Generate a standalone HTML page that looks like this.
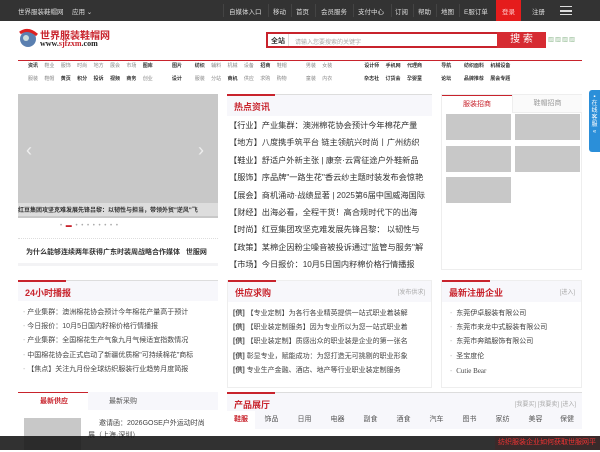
<!DOCTYPE html>
<html><head><meta charset="utf-8"><style>
*{margin:0;padding:0;box-sizing:border-box}
body{width:600px;height:450px;overflow:hidden;background:#fff;font-family:"Liberation Sans","Noto Sans CJK SC",sans-serif;color:#333;position:relative;font-size:8px}
.a{position:absolute;white-space:nowrap}
.top{position:absolute;left:0;top:0;width:600px;height:21px;background:#333;color:#ddd;font-size:6.5px}
.top span{position:absolute;top:6px}
.top s{position:absolute;top:4px;width:1px;height:13px;background:#444}
.red{color:#c8232c}
.box{position:absolute;border:1px solid #eee}
.hd{position:absolute;left:0;top:0;right:0;height:21px;background:#f7f7fb;border-top:1px solid #ddd}
.hd b{position:absolute;left:0;top:-1px;height:2px;width:48px;background:#c8232c}
.hd i{position:absolute;left:7px;top:5px;font-style:normal;color:#c8232c;font-size:9px;font-weight:bold}
.more{position:absolute;right:6px;top:6px;font-size:6px;color:#aaa}
.li{position:absolute;font-size:7px;color:#444;white-space:nowrap}
.gr{position:absolute;background:#c8c8c8}
</style></head><body>
<div class="top">
<span style="left:18px">世界服装鞋帽网</span><span style="left:72px">应用 ⌄</span>
<s style="left:223px"></s><span style="left:229px">自媒体入口</span><s style="left:268px"></s><span style="left:273px">移动</span><s style="left:291px"></s><span style="left:296px">首页</span><s style="left:315px"></s><span style="left:321px">会员服务</span><s style="left:353px"></s><span style="left:358px">支付中心</span><s style="left:391px"></s><span style="left:395px">订阅</span><s style="left:413px"></s><span style="left:418px">帮助</span><s style="left:436px"></s><span style="left:441px">地图</span><s style="left:459px"></s><span style="left:464px">E服订单</span>
<div style="position:absolute;left:496px;top:0;width:25px;height:21px;background:#e51c1c"></div><span style="left:502px;color:#fcc">登录</span><span style="left:532px">注册</span>
<div style="position:absolute;left:560px;top:6px;width:12px;height:9px;border-top:1.5px solid #ddd;border-bottom:1.5px solid #ddd"></div><div style="position:absolute;left:560px;top:10px;width:12px;height:1.5px;background:#ddd"></div>
</div>
<svg class="a" style="left:17px;top:27px" width="22" height="22"><circle cx="11" cy="12" r="8" fill="#5a7fb0"/><path d="M3 6 Q11 0 20 8" stroke="#d22" stroke-width="3" fill="none"/><circle cx="9" cy="11" r="3" fill="#cdd"/></svg>
<div class="a" style="left:40px;top:27px;font-size:10px;font-weight:bold;color:#c8232c">世界服装鞋帽网</div>
<div class="a" style="left:40px;top:39px;font-size:8px;font-weight:bold;color:#222;font-family:'Liberation Serif',serif">www.<span class="red">sjfzxm</span>.com</div>
<div class="a" style="left:266px;top:32px;width:280px;height:16px;border:2px solid #c8232c;background:#fff"></div>
<div class="a" style="left:271px;top:36px;font-size:7px;font-weight:bold">全站</div>
<div class="a" style="left:288px;top:34px;width:1px;height:12px;background:#ddd"></div>
<div class="a" style="left:295px;top:37px;font-size:6px;color:#aaa">请输入您要搜索的关键字</div>
<div class="a" style="left:497px;top:32px;width:49px;height:16px;background:#d62b32;color:#fff;font-size:10px;text-align:center;line-height:16px">搜 索</div>
<div class="a" style="left:548px;top:35px;font-size:6px;color:#7a7;letter-spacing:1px">▨▨▨▨</div>
<div class="a" style="left:18px;top:60px;width:564px;height:1px;background:#c8232c"></div>
<div class="a" style="left:28px;top:60px;font-size:5px;line-height:13px;color:#888;word-spacing:5px">
<b style="color:#333">资讯</b> 鞋业 服饰 时尚 地方 展会 市场 <b style="color:#333">图库</b> &nbsp; <b style="color:#333">图片</b> &nbsp;<b style="color:#333">纺织</b> 辅料 机械 设备 <b style="color:#333">招商</b> 鞋帽 &nbsp; 男装 女装 &nbsp; &nbsp; <b style="color:#333">设计师 手机网 代理商</b> &nbsp; <b style="color:#333">导航 &nbsp;纺织面料 机械设备</b><br>
服装 鞋帽 <b style="color:#333">黄页 积分 投诉 视频 商务</b> 创业 &nbsp; <b style="color:#333">设计</b> &nbsp;服装 分站 <b style="color:#333">商机</b> 供应 求购 购物 &nbsp; 童装 内衣 &nbsp; &nbsp; <b style="color:#333">杂志社 订货会 孕婴童</b> &nbsp; <b style="color:#333">论坛 &nbsp;品牌推荐 展会专题</b></div>
<div class="gr" style="left:18px;top:94px;width:200px;height:124px"></div>
<div class="a" style="left:26px;top:140px;color:#eee;font-size:18px">‹</div><div class="a" style="left:198px;top:140px;color:#eee;font-size:18px">›</div>
<div class="a" style="left:18px;top:203px;width:200px;height:13px;background:#ddd"></div>
<div class="a" style="left:18px;top:205px;width:200px;overflow:hidden;font-size:6px;font-weight:bold;color:#333">红豆集团攻坚克难发展先锋吕黎：以韧性与担当，带领外贸"逆风"飞</div>
<div class="a" style="left:60px;top:223px;font-size:6px;color:#aaa;letter-spacing:1px">• <span style="color:#c8232c">▬</span> • • • • • • • •</div>
<div class="a" style="left:18px;top:238px;width:200px;border-top:1px dotted #ddd"></div>
<div class="a" style="left:26px;top:247px;width:192px;overflow:hidden;font-size:7px;font-weight:bold">为什么能够连续两年获得广东时装周战略合作媒体 &nbsp; 世服网</div>
<div class="a" style="left:18px;top:263px;width:200px;height:3px;background:#f3f3f5"></div>
<div class="box" style="left:227px;top:94px;width:205px;height:176px;border:none">
<div class="hd" style="height:22px"><b></b><i>热点资讯</i></div>
<div style="position:absolute;left:2px;top:23px;font-size:8.2px;line-height:17.4px;color:#333;white-space:nowrap">【行业】产业集群：澳洲棉花协会预计今年棉花产量<br>【地方】八度携手筑平台 链主领航兴时尚丨广州纺织<br>【鞋业】舒适户外新主张 | 康奈·云霄征途户外鞋新品<br>【服饰】序品牌"一路生花"香云纱主题时装发布会惊艳<br>【展会】商机涌动·战绩显著 | 2025第6届中国威海国际<br>【财经】出海必看，全程干货！高合规时代下的出海<br>【时尚】红豆集团攻坚克难发展先锋吕黎： 以韧性与<br>【政策】某棉企因粉尘噪音被投诉通过"监管与服务"解<br>【市场】今日报价：10月5日国内籽棉价格行情播报</div></div>
<div class="box" style="left:441px;top:94px;width:141px;height:176px">
<div style="position:absolute;left:0;top:0;width:70px;height:18px;border-top:1px solid #c8232c;color:#c8232c;font-size:7px;text-align:center;line-height:17px">服装招商</div>
<div style="position:absolute;left:70px;top:0;width:70px;height:18px;background:#fafafa;border-left:1px solid #eee;border-bottom:1px solid #eee;color:#999;font-size:7px;text-align:center;line-height:17px">鞋帽招商</div>
<div class="gr" style="left:4px;top:19px;width:65px;height:26px"></div><div class="gr" style="left:73px;top:19px;width:65px;height:26px"></div>
<div class="gr" style="left:4px;top:51px;width:65px;height:26px"></div><div class="gr" style="left:73px;top:51px;width:65px;height:26px"></div>
<div class="gr" style="left:4px;top:82px;width:65px;height:26px"></div></div>
<div class="a" style="left:589px;top:90px;width:11px;height:62px;background:#2b8fd9;border-radius:3px 0 0 3px;color:#fff;font-size:6px;line-height:7px;text-align:center;padding-top:4px;white-space:normal">▪<br>在<br>线<br>客<br>服<br>«</div>
<div class="box" style="left:18px;top:280px;width:200px;height:122px;border:none;border-bottom:1px solid #eee">
<div class="hd"><b></b><i>24小时播报</i></div>
<div class="li" style="left:5px;top:26px;line-height:14.2px"><span style="color:#bbb">-</span> 产业集群：澳洲棉花协会预计今年棉花产量高于预计<br><span style="color:#bbb">-</span> 今日报价：10月5日国内籽棉价格行情播报<br><span style="color:#bbb">-</span> 产业集群：全国棉花生产气象九月气候适宜指数情况<br><span style="color:#bbb">-</span> 中国棉花协会正式启动了新疆优质棉"可持续棉花"商标<br><span style="color:#bbb">-</span> 【焦点】关注九月份全球纺织服装行业趋势月度简报</div></div>
<div class="box" style="left:227px;top:280px;width:205px;height:108px">
<div class="hd" style="border-top:none"><b></b><i>供应求购</i><span class="more">[发布供求]</span></div>
<div class="li" style="left:5px;top:26px;line-height:14.2px"><b>[供]</b> 【专业定制】为各行各业精英提供一站式职业着装解<br><b>[供]</b> 【职业装定制服务】因为专业所以为您一站式职业着<br><b>[供]</b> 【职业装定制】质感出众的职业装是企业的第一张名<br><b>[供]</b> 彰显专业，赋能成功：为您打造无可挑剔的职业形象<br><b>[供]</b> 专业生产金融、酒店、地产等行业职业装定制服务</div></div>
<div class="box" style="left:441px;top:280px;width:141px;height:108px">
<div class="hd" style="border-top:none"><b></b><i>最新注册企业</i><span class="more">[进入]</span></div>
<div class="li" style="left:8px;top:26px;line-height:14.2px"><span style="color:#bbb">-</span> &nbsp;东莞伊卓服装有限公司<br><span style="color:#bbb">-</span> &nbsp;东莞市来龙中式服装有限公司<br><span style="color:#bbb">-</span> &nbsp;东莞市奔踏服饰有限公司<br><span style="color:#bbb">-</span> &nbsp;圣宝度伦<br><span style="color:#bbb">-</span> &nbsp;<span style="font-family:'Liberation Serif',serif">Cutie Bear</span></div></div>
<div class="a" style="left:18px;top:392px;width:200px;height:18px;background:#f7f7fb"></div>
<div class="a" style="left:18px;top:392px;width:70px;height:18px;background:#fff;border-top:1px solid #c8232c"></div>
<div class="a" style="left:40px;top:396px;font-size:7px;font-weight:bold;color:#c8232c">最新供应</div>
<div class="a" style="left:109px;top:396px;font-size:7px;color:#555">最新采购</div>
<div class="gr" style="left:24px;top:418px;width:57px;height:32px"></div>
<div class="a" style="left:99px;top:418px;font-size:7px;color:#444">邀请函：2026GOSE户外运动时尚</div>
<div class="a" style="left:88px;top:430px;font-size:7px;color:#444">展（上海·深圳）</div>
<div class="box" style="left:227px;top:392px;width:355px;height:60px;border:none">
<div class="hd" style="height:22px"><b></b><i>产品展厅</i><span class="more">[我要买] [我要卖] [进入]</span></div>
<div style="position:absolute;left:0;top:19px;width:355px;height:18px;background:#f7f7fb;font-size:7px;color:#555;line-height:18px;white-space:nowrap">
<span style="display:inline-block;width:28px;text-align:center;background:#fff;color:#c8232c;font-weight:bold">鞋服</span><span style="display:inline-block;width:33px;text-align:center">饰品</span><span style="display:inline-block;width:33px;text-align:center">日用</span><span style="display:inline-block;width:33px;text-align:center">电器</span><span style="display:inline-block;width:33px;text-align:center">副食</span><span style="display:inline-block;width:33px;text-align:center">酒食</span><span style="display:inline-block;width:33px;text-align:center">汽车</span><span style="display:inline-block;width:33px;text-align:center">图书</span><span style="display:inline-block;width:33px;text-align:center">家纺</span><span style="display:inline-block;width:33px;text-align:center">美容</span><span style="display:inline-block;width:30px;text-align:center">保健</span></div></div>
<div class="a" style="left:0;top:436px;width:600px;height:14px;background:rgba(20,20,20,.88)"></div>
<div class="a" style="left:495px;top:436px;width:105px;height:14px;background:#3a2a2a;color:#e33;font-size:7px;line-height:14px;overflow:hidden;padding-left:3px">纺织服装企业如何获取世服网平</div>
</body></html>
